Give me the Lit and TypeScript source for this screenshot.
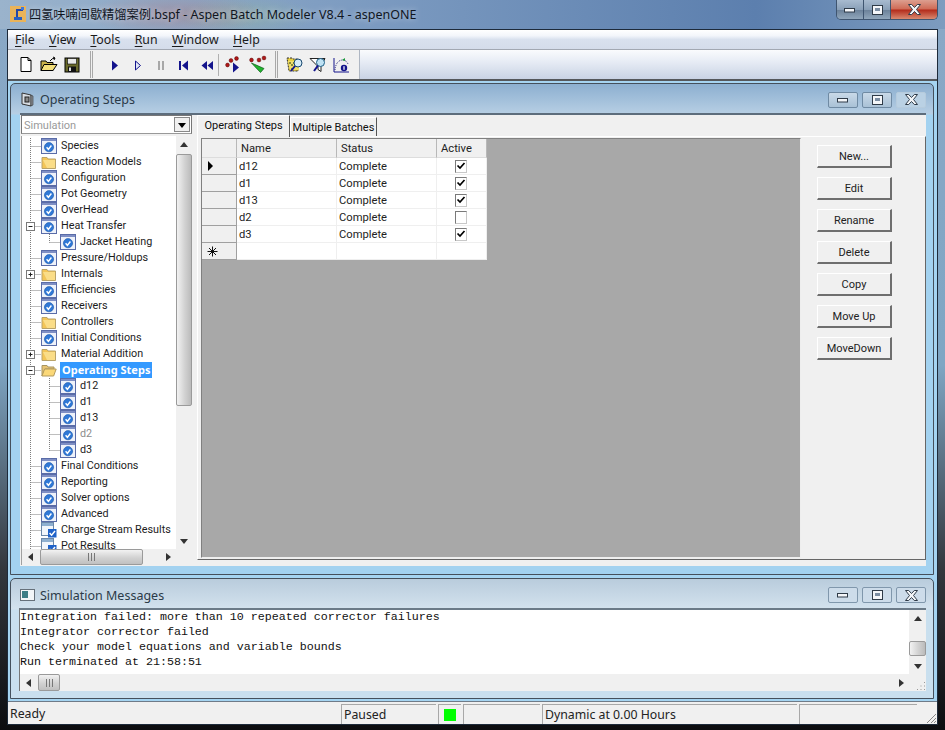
import { LitElement, html, css, svg } from "lit";
import { customElement } from "lit/decorators.js";

type Row = { t: string; k: "doc" | "folder" | "open" | "res"; sub?: boolean; exp?: "+" | "-"; sel?: boolean; dim?: boolean; last?: boolean };

const TREE: Row[] = [
  { t: "Species", k: "doc" },
  { t: "Reaction Models", k: "folder" },
  { t: "Configuration", k: "doc" },
  { t: "Pot Geometry", k: "doc" },
  { t: "OverHead", k: "doc" },
  { t: "Heat Transfer", k: "doc", exp: "-" },
  { t: "Jacket Heating", k: "doc", sub: true, last: true },
  { t: "Pressure/Holdups", k: "doc" },
  { t: "Internals", k: "folder", exp: "+" },
  { t: "Efficiencies", k: "doc" },
  { t: "Receivers", k: "doc" },
  { t: "Controllers", k: "folder" },
  { t: "Initial Conditions", k: "doc" },
  { t: "Material Addition", k: "folder", exp: "+" },
  { t: "Operating Steps", k: "open", exp: "-", sel: true },
  { t: "d12", k: "doc", sub: true },
  { t: "d1", k: "doc", sub: true },
  { t: "d13", k: "doc", sub: true },
  { t: "d2", k: "doc", sub: true, dim: true },
  { t: "d3", k: "doc", sub: true, last: true },
  { t: "Final Conditions", k: "doc" },
  { t: "Reporting", k: "doc" },
  { t: "Solver options", k: "doc" },
  { t: "Advanced", k: "doc" },
  { t: "Charge Stream Results", k: "res" },
  { t: "Pot Results", k: "res" },
];

const STEPS = [
  { n: "d12", on: true, cur: true },
  { n: "d1", on: true },
  { n: "d13", on: true },
  { n: "d2", on: false },
  { n: "d3", on: true },
];

const check = (x: number, y: number) => svg`<circle cx=${x} cy=${y} r="4.6" fill="#2f78d6" stroke="#1b55a8" stroke-width=".6"/><path d="M${x - 2.4} ${y}l1.8 2.1 3-3.8" fill="none" stroke="#fff" stroke-width="1.4"/>`;

function nodeIcon(k: Row["k"]) {
  if (k === "doc")
    return svg`<svg class="ic16" viewBox="0 0 16 16"><rect x=".5" y=".5" width="15" height="15" fill="#eef2fa" stroke="#5a6ca8"/><rect x="1" y="1" width="14" height="2" fill="#7f8fc4"/>${check(8, 9.2)}</svg>`;
  if (k === "folder")
    return svg`<svg class="ic16" viewBox="0 0 16 16"><path d="M1 3.500h5l1 1.500h7.500v9.500H1z" fill="#f3c557" stroke="#b9a36a"/><path d="M2 6h12v8H6z" fill="#fadd88"/></svg>`;
  if (k === "open")
    return svg`<svg class="ic16" viewBox="0 0 16 16"><path d="M1 3.500h5l1 1.500h6v2H4L1 14z" fill="#e8c474" stroke="#a89560"/><path d="M3.600 7h11.600L12.600 14H1z" fill="#fbd878" stroke="#b39a5c"/></svg>`;
  return svg`<svg class="ic16" viewBox="0 0 16 16"><rect x=".5" y=".5" width="12" height="13" fill="#f2f6fb" stroke="#6b87a8"/><rect x="1" y="1" width="11" height="3" fill="#8fb0d0"/><rect x="7" y="7" width="8.500" height="8.500" fill="#1f62c8"/><path d="M8.600 11l2 2.200 3.400-4.200" fill="none" stroke="#fff" stroke-width="1.500"/></svg>`;
}

function gutter(r: Row) {
  const w = r.sub ? 38 : 19;
  return svg`<svg class="gut" width=${w} height="16" viewBox="0 0 ${w} 16">
    <path d="M8.500 0V16" class="dots"/>
    ${r.sub
      ? svg`<path d="M27.500 0V${r.last ? 8.5 : 16}M27.500 8.500H38" class="dots"/>`
      : svg`<path d="M8.500 8.500H19" class="dots"/>`}
    ${r.exp
      ? svg`<rect x="4.500" y="4.500" width="8" height="8" fill="#fff" stroke="#7a7a7a"/><path d="M6.500 8.500h4${r.exp === "+" ? "M8.500 6.500v4" : ""}" stroke="#222" fill="none"/>`
      : ""}
  </svg>`;
}

const tri = (d: "u" | "d" | "l" | "r", c = "#333") => {
  const p = { u: "M1 7L5 2 9 7z", d: "M1 3L9 3 5 8z", l: "M7 1V9L2 5z", r: "M3 1V9L8 5z" }[d];
  return svg`<svg class="ic10" viewBox="0 0 10 10"><path d=${p} fill=${c}/></svg>`;
};

const grip = () => svg`<svg width="9" height="8" viewBox="0 0 9 8"><path d="M1.500 0v8M4.500 0v8M7.500 0v8" stroke="#777"/></svg>`;

const B = "#14148c";
const tb: Record<string, unknown> = {
  new: svg`<path d="M5 2.500h7l3 3v11H5z" fill="#fff" stroke="#000"/><path d="M12 2.500v3h3" fill="none" stroke="#000"/>`,
  open: svg`<path d="M2 6h5l1 1.500h6v8H2z" fill="#c9b24a" stroke="#000"/><path d="M2 15.500L5 9.500h13l-4 6z" fill="#f3de7a" stroke="#000"/><path d="M11 6q2-3 5-3M14 2l2 1-1 2" fill="none" stroke="#000"/>`,
  save: svg`<rect x="3" y="3" width="14" height="14" fill="#6a6a2a" stroke="#000"/><rect x="5.500" y="3.500" width="9" height="5.500" fill="#e8e8e8" stroke="#000" stroke-width=".6"/><rect x="6" y="11.500" width="8" height="5.500" fill="#111"/><rect x="7" y="12.500" width="2" height="3.500" fill="#ddd"/>`,
  play: svg`<path d="M7 5.500V15.500L13 10.500z" fill=${B}/>`,
  step: svg`<path d="M7.500 6V15L12.500 10.500z" fill="#dfe6f4" stroke=${B}/>`,
  pause: svg`<rect x="7" y="6" width="2" height="9" fill="#a8a8a8"/><rect x="11" y="6" width="2" height="9" fill="#a8a8a8"/>`,
  first: svg`<rect x="5" y="6" width="2" height="9" fill=${B}/><path d="M14 5.500V15.500L8 10.500z" fill=${B}/>`,
  back: svg`<path d="M10 6V15L4.500 10.500zM16 6V15L10.500 10.500z" fill=${B}/>`,
  dots: svg`<g fill="#b01818" stroke="#5a0808" stroke-width=".5"><circle cx="3.500" cy="10" r="1.900"/><circle cx="7" cy="5.500" r="1.900"/><circle cx="12.500" cy="3.500" r="1.900"/></g><path d="M9 7.500V17.500L15 12.500z" fill=${B}/>`,
  dotsx: svg`<g fill="#b01818" stroke="#5a0808" stroke-width=".5"><circle cx="3.500" cy="5" r="1.900"/><circle cx="11" cy="5" r="1.900"/><circle cx="16" cy="3" r="1.900"/></g><path d="M3.500 8L16 13.500 12.500 17.500z" fill="#22b52e" stroke="#0c5a18" stroke-width=".7"/>`,
  q1: svg`<path d="M2 3h5l1 1h5v12H4z" fill="#e9cf3e" stroke="#333" stroke-dasharray="2 1"/><path d="M3 6h11v9H5z" fill="#f1df6a"/><path d="M4 7h2v2H4zM8 7h2v2H8zM6 9h2v2H6zM6 13h2v2H6z" fill="#8a8a3a"/><circle cx="13" cy="8" r="4" fill="#d6ecf8" stroke="#17476e"/><path d="M10 11l-4 5" stroke=${B} stroke-width="2"/>`,
  q2: svg`<path d="M2 3.500h15l-4 8v5l-3-2v-3z" fill="#fff" stroke="#222"/><circle cx="12.500" cy="7.500" r="4" fill="#bfe2f4" stroke="#1d5f86"/><path d="M10 10.500l-4 5.500" stroke=${B} stroke-width="2"/>`,
  q3: svg`<path d="M3 3v14h15" fill="none" stroke=${B}/><path d="M4 15q1-10 8-10 3 0 5 4" fill="none" stroke="#227" stroke-dasharray="1 1"/><circle cx="13" cy="13" r="3.200" fill=${B}/><rect x="12.400" y="11.200" width="1.200" height="3.600" fill="#fff"/><path d="M11 5l3-2v3z" fill="#1a9a3a"/>`,
};

@customElement("app-root")
export class AppRoot extends LitElement {
  static styles = css`
    :host { display: block; width: 945px; height: 730px; overflow: hidden; font-family: Roboto, "Noto Sans", "Noto Sans CJK SC", sans-serif; color: #111; }
    * { box-sizing: border-box; }
    .frame { width: 945px; height: 730px; display: flex; flex-direction: column; align-items: stretch;
      background:
        radial-gradient(ellipse 90px 22px at 175px 14px, rgba(190,110,110,.35), transparent),
        radial-gradient(ellipse 70px 20px at 245px 16px, rgba(150,190,130,.3), transparent),
        linear-gradient(90deg, #9ab3cc 0, #7b9ac0 40%, #5c7fae 80%, #7d9cbf 100%) top/100% 29px no-repeat,
        linear-gradient(180deg, #8aa8c6 0, #7fa6c4 50%, #33373d 78%, #0c0d10 100%);
    }
    .title { height: 29px; flex: none; display: flex; align-items: flex-start; padding-left: 10px; }
    .appicon { width: 16px; height: 16px; margin: 6px 3px 0 0; flex: none; }
    .ttext { font: 12.500px/29px "Noto Sans", "Noto Sans CJK SC", sans-serif; color: #10161f; flex: 1; white-space: nowrap; text-shadow: 0 0 6px rgba(255,255,255,.6); }
    .ttext b { font-weight: 400; font-size: 12.200px; }
    .capbtns { width: 102px; height: 20px; margin: 0 7px 0 0; display: flex; border: 1px solid #3f5570; border-top: 0; border-radius: 0 0 5px 5px; overflow: hidden; }
    .cap { flex: 0 0 27px; display: flex; align-items: center; justify-content: center; background: linear-gradient(180deg, #a8bbd0 0, #8aa0b8 50%, #6b8199 52%, #90a6bb 100%); border-right: 1px solid #3f5570; }
    .cap.close { flex: 1; border: 0; background: linear-gradient(180deg, #dc9f90 0, #cf6a55 48%, #b32a1a 52%, #d98a70 100%); }
    .glyph { stroke: #2f3b48; fill: #f4f6f9; }
    .client { flex: 1; margin: 0 7px 5px 7px; display: flex; flex-direction: column; border: 1px solid #1d2a3a; min-height: 0; background: #f0f0f0; }
    .menu { height: 20px; flex: none; display: flex; align-items: center; padding-left: 7px; gap: 14.400px; font: 12.300px "Noto Sans", sans-serif; color: #1a1a1a; border-bottom: 1px solid #a2a8b2;
      background: linear-gradient(180deg, #fff 0, #f3f6fb 30%, #d9e1ee 50%, #d4dcea 100%); }
    .menu u { text-decoration-thickness: 1px; text-underline-offset: 2px; }
    .tools { height: 31px; flex: none; display: flex; align-items: center; border-bottom: 2px solid #55585c;
      background: linear-gradient(180deg, #fafbfd 0, #e7ecf5 40%, #c9d3e4 100%); }
    .tbar { width: 352px; flex: none; height: 29px; background: #f0f0f0; display: flex; align-items: center; padding-left: 6px; border-right: 1px solid #aeb6c2; }
    .tbtn { width: 23px; height: 22px; flex: none; display: flex; align-items: center; justify-content: center; }
    .tbtn svg { width: 20px; height: 20px; }
    .tbtn.w { width: 24px; }
    .sep2 { width: 3px; height: 27px; border-left: 1px solid #a8a8a8; border-right: 1px solid #a8a8a8; flex: none; }
    .sep1 { width: 1px; height: 22px; background: #b0b0b0; flex: none; }
    .g1 { margin-left: 7px; margin-right: 10px; }
    .s1 { margin-right: 3px; }
    .g3 { margin-left: 5px; margin-right: 5px; }
    .mdi { flex: 1; min-height: 0; display: flex; flex-direction: column; padding: 2px 3px 2px 2px; gap: 3px; background: #a5d4f1; }
    .child { border: 1px solid #45505c; border-radius: 5px 5px 0 0; display: flex; flex-direction: column; padding: 0 7px 8px 9px; }
    .c1 { height: 492px; flex: none; background: linear-gradient(180deg, #8cafd0 0, #b7cfe4 30px, #a3d2f0 31px, #a3d2f0 100%); }
    .c2 { flex: 1; padding: 0 7px 7px 8px; background: linear-gradient(180deg, #b9ccdc 0, #d3e2ee 30px, #c9dfee 31px, #c9dfee 100%); }
    .ctitle { height: 29px; flex: none; display: flex; align-items: center; gap: 5px; padding-top: 2px; font: 12.500px "Noto Sans", sans-serif; color: #2b3a48; }
    .c2 .ctitle { padding-top: 3px; padding-left: 1px; }
    .ctitle span { flex: 1; }
    .ctitle svg.cicon { width: 15px; height: 15px; }
    .cbtn { width: 30px; height: 16px; margin-left: -1px; border: 1px solid #6f8aa3; border-radius: 2px; display: flex; align-items: center; justify-content: center; background: linear-gradient(180deg, #c9d9e8 0, #a9c1d6 100%); flex: none; }
    .cbtn.off { border-color: #b6cbdd; background: #bad1e4; }
    .c2 .cbtn, .c2 .cbtn.off { border-color: #8097ac; background: #cddcea; }
    .cbody { flex: 1; min-height: 0; background: #f0f0f0; border-top: 2px solid #5d6d7c; display: flex; }
    .side { width: 171px; flex: none; margin-left: 1px; display: flex; flex-direction: column; }
    .combo { height: 19px; flex: none; display: flex; align-items: center; background: #fff; border: 1px solid #777; color: #9a9a9a; font-size: 11px; padding: 1px 0 0 2px; border-bottom-color: #999; }
    .combo span { flex: 1; }
    .combo i { width: 16px; height: 15px; margin-right: 1px; margin-top: -1px; background: #f0f0f0; border: 1px solid #888; display: flex; align-items: center; justify-content: center; }
    .treebox { height: 429px; flex: none; display: grid; grid-template-columns: 1fr 16px; grid-template-rows: 1fr 16px; background: #f0f0f0; border-left: 1px solid #a0a0a0; margin-top: 2px; }
    .tree { background: #fff; overflow: hidden; padding-top: 2px; min-width: 0; }
    .row { height: 16px; display: flex; align-items: center; white-space: nowrap; font-size: 10.800px; color: #1c1c1c; }
    .gut { flex: none; }
    .dots { stroke: #7d7d7d; stroke-dasharray: 1 1; fill: none; }
    .ic16 { width: 16px; height: 16px; flex: none; }
    .ic10 { width: 10px; height: 10px; display: block; }
    .lbl { margin-left: 3px; padding: 0 1px; line-height: 16px; }
    .row.sel .lbl { background: #3399ff; color: #fff; font: 700 11px/16px "Noto Sans", sans-serif; padding: 0 2px; }
    .row.dim .lbl { color: #8c8c8c; }
    .vbar { background: #f0f0f0; display: flex; flex-direction: column; align-items: center; min-height: 0; }
    .hbar { background: #f0f0f0; display: flex; align-items: center; min-width: 0; }
    .arrow { flex: none; display: flex; align-items: center; justify-content: center; }
    .vbar .arrow { height: 17px; width: 100%; }
    .hbar .arrow { width: 17px; height: 100%; }
    .thumb { border: 1px solid #9a9a9a; border-radius: 2px; display: flex; align-items: center; justify-content: center; flex: none; }
    .vbar .thumb { width: 100%; background: linear-gradient(90deg, #f2f2f2 0, #d2d2d2 55%, #bbb 100%); }
    .hbar .thumb { background: linear-gradient(180deg, #f2f2f2 0, #d2d2d2 55%, #c0c0c0 100%); height: 100%; }
    .sp { flex: 1; }
    .tree-thumb { height: 252px; margin-top: 1px; }
    .treeh-thumb { width: 103px; margin-left: 1px; }
    .corner { background: #f0f0f0; display: flex; align-items: flex-end; justify-content: flex-end; }
    .main { flex: 1; min-width: 0; margin-left: 5px; display: flex; flex-direction: column; }
    .tabs { height: 21px; flex: none; display: flex; align-items: flex-end; }
    .tab { font-size: 11px; display: flex; align-items: center; justify-content: center; background: #f0f0f0; border-right: 1px solid #555; border-top: 1px solid #fff; border-left: 1px solid #fff; white-space: nowrap; }
    .tab.on { width: 93px; height: 22px; padding-bottom: 3px; margin-bottom: -1px; z-index: 1; }
    .tab.off { width: 87px; height: 19px; padding-top: 1px; }
    .panel { height: 424px; flex: none; border: 1px solid #fff; border-right: 1px solid #666; border-bottom: 1px solid #666; display: flex; padding: 1px 0 1px 3px; background: #f0f0f0; }
    .grey { width: 600px; flex: none; background: #a8a8a8; border: 1px solid #808080; border-right-color: #eee; border-bottom-color: #eee; }
    .gtable { display: grid; grid-template-columns: 35px 100px 100px 50px; grid-template-rows: 19px repeat(6, 17px); width: 285px; font-size: 11.200px; color: #222; background: #fff; }
    .h { background: #f0f0f0; border-right: 1px solid #b8b8b8; border-bottom: 1px solid #ddd; display: flex; align-items: center; padding-left: 4px; }
    .rh { background: #f0f0f0; border-right: 1px solid #a0a0a0; border-bottom: 1px solid #a0a0a0; display: flex; align-items: center; padding-left: 5px; }
    .c { border-right: 1px solid #efefef; border-bottom: 1px solid #efefef; display: flex; align-items: center; padding: 1px 0 0 2px; }
    .c.ck { justify-content: center; padding: 0 2px 0 0; }
    .cb { width: 12px; height: 13px; border: 1px solid #7a7a7a; border-right-color: #c8c8c8; border-bottom-color: #c8c8c8; background: #fff; display: flex; align-items: center; justify-content: center; }
    .cb svg { width: 10px; height: 10px; }
    .btns { flex: 1; display: flex; flex-direction: column; gap: 9px; padding: 7px 0 0 16px; }
    .btn { width: 75px; height: 23px; flex: none; background: #f0f0f0; border: 1px solid #fff; border-right: 2px solid #6e6e6e; border-bottom: 2px solid #6e6e6e; font-size: 11px; color: #222; display: flex; align-items: center; justify-content: center; }
    .msgbody { flex: 1; min-height: 0; border-top: 2px solid #6b7a88; border-left: 1px solid #777; display: grid; grid-template-columns: 1fr 17px; grid-template-rows: 1fr 17px; background: #f0f0f0; }
    .msgs { background: #fff; font: 11.670px/15px "Liberation Mono", monospace; color: #111; white-space: pre; overflow: hidden; min-width: 0; }
    .c2 .vbar .thumb { height: 15px; }
    .msg-sp-a { height: 14px; flex: none; }
    .msgh-thumb { width: 22px; margin-left: 1px; }
    .status { height: 23px; flex: none; display: flex; align-items: stretch; background: #f0f0f0; border-top: 1px solid #6f7b88; font: 12.300px "Noto Sans", sans-serif; color: #222; padding-top: 2px; }
    .st { border-top: 1px solid #a8a8a8; border-left: 1px solid #a8a8a8; padding: 0 0 1px 2px; display: flex; align-items: center; flex: none; margin-left: 2px; }
    .st.ready { border: 0; width: 331px; margin: 0; }
    .paused { width: 95px; }
    .led { width: 23px; justify-content: center; padding: 0; }
    .led i { width: 12px; height: 12px; background: #00ff00; display: block; }
    .e1 { width: 77px; } .dyn { width: 255px; } .e2 { width: 118px; }
    .szg { flex: 1; display: flex; align-items: flex-end; justify-content: flex-end; }
  `;

  private capGlyph(kind: "min" | "max" | "x") {
    if (kind === "min") return html`<svg width="12" height="8" viewBox="0 0 12 8"><rect class="glyph" x=".5" y="2.500" width="10" height="3.500"/></svg>`;
    if (kind === "max") return html`<svg width="11" height="10" viewBox="0 0 11 10"><rect class="glyph" x=".5" y=".5" width="10" height="9"/><rect x="3" y="3" width="5" height="3" fill="#7b8da2"/></svg>`;
    return html`<svg width="13" height="11" viewBox="0 0 13 11"><path class="glyph" d="M.5 .5h3.200l2.800 3 2.800-3h3.200l-4 5 4 5h-3.200l-2.800-3-2.800 3H.5l4-5z"/></svg>`;
  }

  private caption(title: string, icon: unknown, off: boolean) {
    return html`<div class="ctitle">${icon}<span>${title}</span>
      <div class="cbtn">${this.capGlyph("min")}</div>
      <div class="cbtn">${this.capGlyph("max")}</div>
      <div class="cbtn ${off ? "off" : ""}">${this.capGlyph("x")}</div></div>`;
  }

  private tbtn(k: string, w = false) {
    return html`<div class="tbtn ${w ? "w" : ""}"><svg viewBox="0 0 20 20">${tb[k]}</svg></div>`;
  }

  render() {
    return html`<div class="frame">
      <div class="title">
        <svg class="appicon" viewBox="0 0 16 16"><rect width="16" height="16" fill="#e9b35a"/><path d="M4 11h8v3H4z" fill="#2a5fc0"/><path d="M6 3h2v8H6zM8 3h5v2H8z" fill="#2447a8"/><rect x="11" y="1" width="3" height="3" fill="#3a78e0"/></svg>
        <div class="ttext"><b>四氢呋喃间歇精馏案例</b>.bspf - Aspen Batch Modeler V8.4 - aspenONE</div>
        <div class="capbtns"><div class="cap">${this.capGlyph("min")}</div><div class="cap">${this.capGlyph("max")}</div><div class="cap close">${this.capGlyph("x")}</div></div>
      </div>
      <div class="client">
        <div class="menu">
          <span><u>F</u>ile</span><span><u>V</u>iew</span><span><u>T</u>ools</span><span><u>R</u>un</span><span><u>W</u>indow</span><span><u>H</u>elp</span>
        </div>
        <div class="tools"><div class="tbar">
          ${this.tbtn("new")}${this.tbtn("open")}${this.tbtn("save")}
          <div class="sep2 g1"></div>
          ${this.tbtn("play")}${this.tbtn("step")}${this.tbtn("pause")}${this.tbtn("first")}${this.tbtn("back")}
          <div class="sep1 s1"></div>
          ${this.tbtn("dots", true)}${this.tbtn("dotsx", true)}
          <div class="sep2 g3"></div>
          ${this.tbtn("q1")}${this.tbtn("q2")}${this.tbtn("q3")}
        </div></div>
        <div class="mdi">
          <div class="child c1">
            ${this.caption("Operating Steps", html`<svg class="cicon" viewBox="0 0 15 15"><path d="M2 1l9 2v11l-9-2z" fill="#d8dde3" stroke="#333"/><rect x="5" y="5" width="4" height="5" fill="#888" stroke="#222"/><path d="M11 3l2 1v9l-2 1z" fill="#8a8f96" stroke="#333" stroke-width=".6"/></svg>`, true)}
            <div class="cbody">
              <div class="side">
                <div class="combo"><span>Simulation</span><i>${tri("d", "#000")}</i></div>
                <div class="treebox">
                  <div class="tree">
                    ${TREE.map(
                      (r) => html`<div class="row ${r.sel ? "sel" : ""} ${r.dim ? "dim" : ""}">${gutter(r)}${nodeIcon(r.k)}<span class="lbl">${r.t}</span></div>`
                    )}
                  </div>
                  <div class="vbar">
                    <div class="arrow">${tri("u")}</div>
                    <div class="thumb tree-thumb"></div>
                    <div class="sp"></div>
                    <div class="arrow">${tri("d")}</div>
                  </div>
                  <div class="hbar">
                    <div class="arrow">${tri("l")}</div>
                    <div class="thumb treeh-thumb">${grip()}</div>
                    <div class="sp"></div>
                    <div class="arrow">${tri("r")}</div>
                  </div>
                  <div class="corner"></div>
                </div>
              </div>
              <div class="main">
                <div class="tabs">
                  <div class="tab on">Operating Steps</div>
                  <div class="tab off">Multiple Batches</div>
                </div>
                <div class="panel">
                  <div class="grey">
                    <div class="gtable">
                      <div class="h"></div><div class="h">Name</div><div class="h">Status</div><div class="h">Active</div>
                      ${STEPS.map(
                        (s) => html`<div class="rh">${s.cur ? html`<svg width="8" height="10" viewBox="0 0 8 10"><path d="M1 0V10L6 5z" fill="#000"/></svg>` : ""}</div>
                          <div class="c">${s.n}</div><div class="c">Complete</div>
                          <div class="c ck"><div class="cb">${s.on ? html`<svg viewBox="0 0 10 10"><path d="M1.500 4.500l2.500 2.500 4.500-5" fill="none" stroke="#000" stroke-width="1.700"/></svg>` : ""}</div></div>`
                      )}
                      <div class="rh"><svg width="11" height="11" viewBox="0 0 11 11"><path d="M5.500 .5v10M.5 5.500h10M2 2l7 7M9 2l-7 7" stroke="#111" fill="none"/></svg></div>
                      <div class="c"></div><div class="c"></div><div class="c"></div>
                    </div>
                  </div>
                  <div class="btns">
                    ${["New...", "Edit", "Rename", "Delete", "Copy", "Move Up", "MoveDown"].map((b) => html`<div class="btn">${b}</div>`)}
                  </div>
                </div>
              </div>
            </div>
          </div>
          <div class="child c2">
            ${this.caption("Simulation Messages", html`<svg class="cicon" viewBox="0 0 15 15"><rect x=".5" y="1.500" width="14" height="11" fill="#f2f5f8" stroke="#66707a"/><rect x="2" y="3" width="6" height="7" fill="#3c7d86"/></svg>`, false)}
            <div class="msgbody">
              <div class="msgs">Integration failed: more than 10 repeated corrector failures
Integrator corrector failed
Check your model equations and variable bounds
Run terminated at 21:58:51</div>
              <div class="vbar">
                <div class="arrow">${tri("u")}</div>
                <div class="msg-sp-a"></div>
                <div class="thumb"></div>
                <div class="sp"></div>
                <div class="arrow">${tri("d")}</div>
              </div>
              <div class="hbar">
                <div class="arrow">${tri("l")}</div>
                <div class="thumb msgh-thumb">${grip()}</div>
                <div class="sp"></div>
                <div class="arrow">${tri("r")}</div>
              </div>
              <div class="corner"><svg width="10" height="10" viewBox="0 0 10 10"><path d="M8.500 1v1M8.500 4.500v1M8.500 8v1M5 4.500v1M5 8v1M1.500 8v1" stroke="#999"/></svg></div>
            </div>
          </div>
        </div>
        <div class="status">
          <div class="st ready">Ready</div>
          <div class="st paused">Paused</div>
          <div class="st led"><i></i></div>
          <div class="st e1"></div>
          <div class="st dyn">Dynamic at 0.00 Hours</div>
          <div class="st e2"></div>
          <div class="szg"><svg width="12" height="12" viewBox="0 0 12 12"><path d="M11 2L2 11M11 6L6 11M11 9L9 11" stroke="#888"/></svg></div>
        </div>
      </div>
    </div>`;
  }
}
